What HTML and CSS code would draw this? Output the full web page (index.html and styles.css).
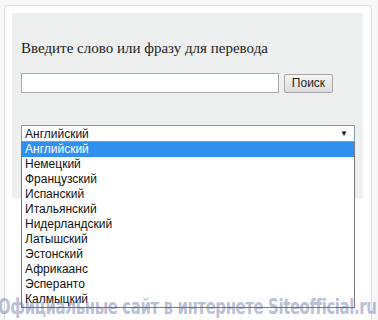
FILE: index.html
```html
<!DOCTYPE html>
<html lang="ru">
<head>
    <meta charset="UTF-8">
    <meta name="viewport" content="width=device-width, initial-scale=1.0">
    <title>Перевод</title>
    <link rel="stylesheet" href="styles.css">
</head>
<body>

<div class="card">
    <div class="panel">
        <p class="prompt">Введите слово или фразу для перевода</p>

        <div class="search-row">
            <input type="text" class="search-input">
            <button class="search-btn">Поиск</button>
        </div>

        <div class="lang-select">
            <div class="lang-current">
                <span>Английский</span>
                <span class="arrow">&#9660;</span>
            </div>
            <ul class="lang-list">
                <li class="active">Английский</li>
                <li>Немецкий</li>
                <li>Французский</li>
                <li>Испанский</li>
                <li>Итальянский</li>
                <li>Нидерландский</li>
                <li>Латышский</li>
                <li>Эстонский</li>
                <li>Африкаанс</li>
                <li>Эсперанто</li>
                <li>Калмыцкий</li>
            </ul>
        </div>
    </div>
</div>

<div class="watermark">Официальные сайт в интернете Siteofficial.ru</div>

</body>
</html>
```

FILE: styles.css
```css
html, body {
    margin: 0;
    height: 100%;
}
body {
    background: #f7f7f7;
    font-family: "Liberation Sans", Arial, sans-serif;
    overflow: hidden;
    position: relative;
}
.card {
    margin: 5px 6px 0 4px;
    height: 315px;
    box-sizing: border-box;
    background: #fff;
    border: 1px solid #e0e0e0;
    border-bottom: none;
    border-radius: 4px 4px 0 0;
    padding: 7px 8px 0 7px;
}
.panel {
    background: #eef0f0;
    height: 185px;
    box-sizing: border-box;
    padding: 27px 9px 0 9px;
}
.prompt {
    margin: 0;
    font-family: "Liberation Serif", "Times New Roman", serif;
    font-size: 15px;
    color: #222;
}
.search-row {
    display: flex;
    align-items: center;
    gap: 5px;
    margin-top: 16px;
}
.search-input {
    width: 258px;
    height: 20px;
    box-sizing: border-box;
    border: 1px solid #a9a9a9;
    background: #fff;
    margin: 0;
    padding: 0 3px;
}
.search-btn {
    width: 49px;
    height: 19px;
    padding: 0;
    border: 1px solid #a6a6a6;
    border-radius: 2px;
    background: linear-gradient(#f6f6f6, #dcdcdc);
    font-family: "Liberation Sans", Arial, sans-serif;
    font-size: 12px;
    color: #222;
}
.lang-select {
    position: relative;
    margin-top: 32px;
    width: 334px;
    font-size: 12px;
    color: #111;
}
.lang-current {
    height: 17px;
    box-sizing: border-box;
    border: 1px solid #7f9db9;
    background: #fff;
    display: flex;
    align-items: center;
    justify-content: space-between;
    padding: 0 6px 0 3px;
}
.arrow {
    font-size: 8px;
}
.lang-list {
    position: absolute;
    top: 17px;
    left: 0;
    right: 0;
    margin: 0;
    padding: 0;
    list-style: none;
    background: #fff;
    border: 1px solid #7a7a7a;
    border-top: none;
}
.lang-list li {
    height: 15px;
    line-height: 15px;
    padding-left: 3px;
}
.lang-list li.active {
    background: #3090f0;
    color: #fff;
}
.watermark {
    position: absolute;
    left: -2px;
    top: 295px;
    white-space: nowrap;
    font-family: "DejaVu Sans Condensed", "Liberation Sans", sans-serif;
    font-weight: bold;
    font-size: 21px;
    letter-spacing: -0.5px;
    color: rgba(70, 90, 150, 0.4);
    transform: scaleX(0.79);
    transform-origin: left top;
}
```
